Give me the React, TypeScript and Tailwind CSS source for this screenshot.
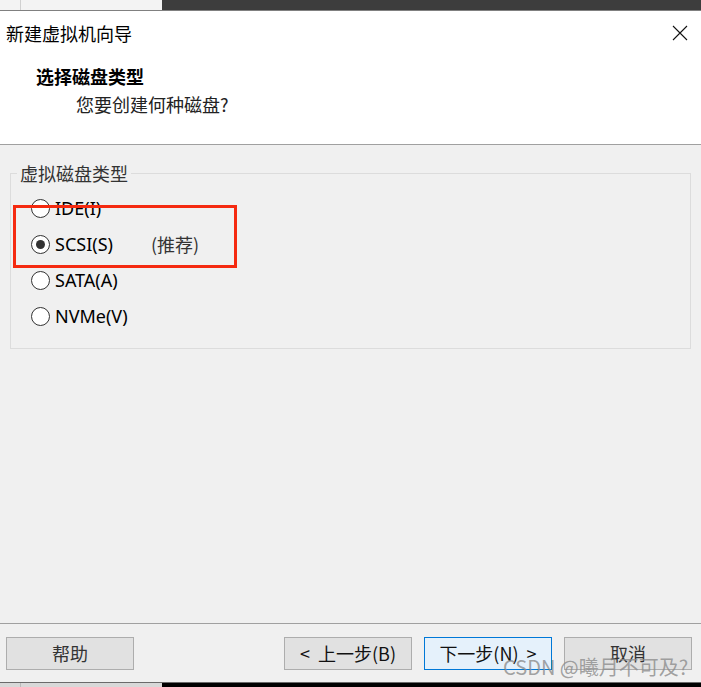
import React from "react";

const cjk = { fontFamily: '"Noto Sans CJK SC", "Noto Sans", sans-serif' };
const latin = { fontFamily: '"Noto Sans", "Noto Sans CJK SC", sans-serif' };

function Radio({ checked, label, extra }: { checked?: boolean; label: string; extra?: string }) {
  return (
    <div className="flex items-center h-[36px]">
      <div className="ml-[20px] w-[19px] h-[19px] rounded-full border border-[#333] bg-white flex items-center justify-center">
        {checked && <div className="w-[9px] h-[9px] rounded-full bg-[#333]" />}
      </div>
      <span className="ml-[5px] text-[18px] leading-[22px] text-black" style={latin}>
        {label}
      </span>
      {extra && (
        <span className="ml-[38px] text-[18px] leading-[22px] text-[#333]" style={cjk}>
          {extra}
        </span>
      )}
    </div>
  );
}

function Btn({ children, primary }: { children: React.ReactNode; primary?: boolean }) {
  return (
    <div
      className={
        "w-[128px] h-[33px] flex items-center justify-center text-[18px] " +
        (primary ? "bg-[#e5f1fb] border border-[#0078d7]" : "bg-[#e1e1e1] border border-[#adadad]")
      }
      style={cjk}
    >
      {children}
    </div>
  );
}

export default function App() {
  return (
    <div className="w-[701px] h-[687px] flex flex-col bg-[#f0f0f0] overflow-hidden relative">
      {/* top strip */}
      <div className="h-[10px] flex shrink-0">
        <div className="w-[21px] bg-[#f3f3f3] border-r border-[#d0d0d0]" />
        <div className="w-[141px] bg-[#f3f3f3]" />
        <div className="flex-1 bg-[#3d3d3d]" />
      </div>
      <div className="h-[1px] bg-[#808080] shrink-0" />
      {/* header */}
      <div className="h-[134px] bg-white border-b border-[#a0a0a0] shrink-0 relative">
        <div className="flex justify-between items-start">
          <div className="ml-[6px] mt-[10px] text-[18px] leading-[24px] text-black" style={cjk}>
            新建虚拟机向导
          </div>
          <svg className="mt-[14px] mr-[13px]" width="16" height="16" viewBox="0 0 16 16">
            <path d="M1 1 L15 15 M15 1 L1 15" stroke="#111" strokeWidth="1.1" fill="none" />
          </svg>
        </div>
        <div className="ml-[36px] mt-[19px] text-[18px] leading-[24px] font-bold text-black" style={cjk}>
          选择磁盘类型
        </div>
        <div className="ml-[76px] mt-[4px] text-[18px] leading-[24px] text-[#222]" style={cjk}>
          您要创建何种磁盘?
        </div>
      </div>
      {/* body */}
      <div className="h-[478px] shrink-0 relative">
        <fieldset className="ml-[10px] mt-[17px] w-[681px] h-[187px] border border-[#dcdcdc] pl-[6px]">
          <legend className="px-[3px] text-[18px] leading-[22px] text-[#333]" style={cjk}>
            虚拟磁盘类型
          </legend>
          <div className="-ml-[6px] mt-[6px] flex flex-col">
            <Radio label="IDE(I)" />
            <Radio label="SCSI(S)" checked extra="(推荐)" />
            <Radio label="SATA(A)" />
            <Radio label="NVMe(V)" />
          </div>
        </fieldset>
        <div className="absolute left-[13px] top-[60px] w-[224px] h-[63px] border-[3px] border-[#f52a10]" />
      </div>
      <div className="h-[1px] bg-[#a0a0a0] shrink-0" />
      {/* footer */}
      <div className="h-[58px] shrink-0 flex items-start pt-[13px] pl-[6px] pr-[9px]">
        <Btn>
          <span className="text-[#333]">帮助</span>
        </Btn>
        <div className="flex-1" />
        <div className="flex gap-[12px]">
          <Btn>
            <span className="text-[#111]">&lt;&nbsp;&nbsp;上一步(B)</span>
          </Btn>
          <Btn primary>
            <span className="text-[#111]">下一步(N)&nbsp;&nbsp;&gt;</span>
          </Btn>
          <Btn>
            <span className="text-[#333]">取消</span>
          </Btn>
        </div>
      </div>
      <div className="h-[1px] bg-[#6a6a6a] shrink-0" />
      {/* bottom strip */}
      <div className="h-[4px] flex shrink-0">
        <div className="w-[21px] bg-[#d8d8d8] border-r border-[#bbb]" />
        <div className="w-[141px] bg-[#d8d8d8]" />
        <div className="flex-1 bg-black" />
      </div>
      {/* watermark */}
      <div
        className="absolute left-[503px] top-[653px] text-[20px] leading-[27px] text-[#8c8c8c]/80 whitespace-nowrap"
        style={cjk}
      >
        CSDN @曦月不可及?
      </div>
    </div>
  );
}
